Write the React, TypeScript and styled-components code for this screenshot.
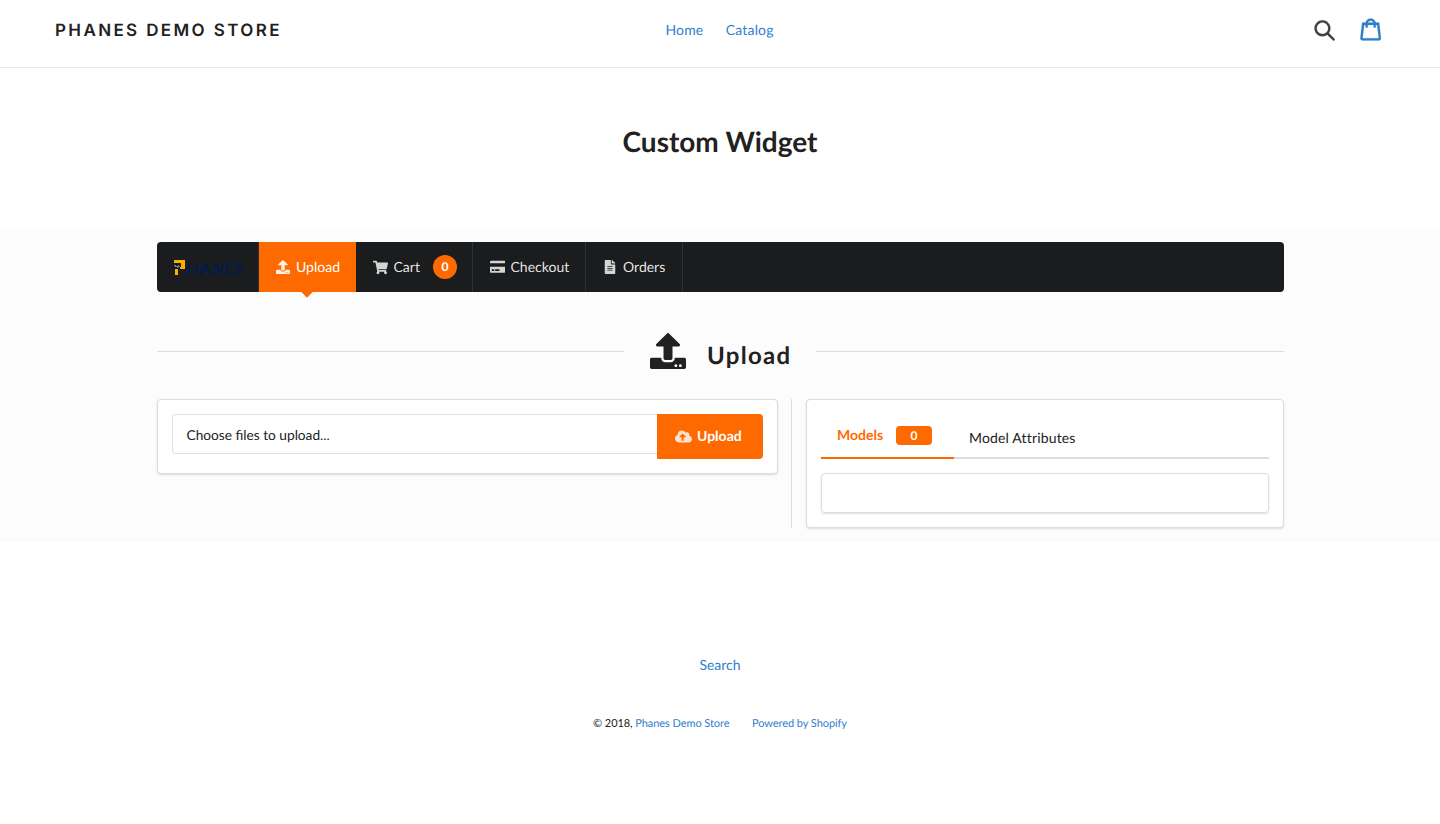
import React from "react";
import styled, { createGlobalStyle } from "styled-components";
import {
  FaUpload,
  FaShoppingCart,
  FaCreditCard,
  FaFileAlt,
  FaCloudUploadAlt,
} from "react-icons/fa";

const orange = "#ff6a00";
const link = "#2f80cc";

const GlobalStyle = createGlobalStyle`
  *, *::before, *::after { box-sizing: border-box; }
  body {
    margin: 0;
    background: #fff;
    color: #212121;
    font: 14px/20px Lato, "Liberation Sans", sans-serif;
    text-rendering: geometricPrecision;
  }
  a { color: ${link}; text-decoration: none; }
  svg { display: block; flex: none; }
`;

const Header = styled.header`
  display: grid;
  grid-template-columns: 1fr auto 1fr;
  align-items: center;
  height: 68px;
  padding: 0 59px 8px 55px;
  border-bottom: 1px solid #e8e9eb;
`;

const StoreName = styled.a`
  && { color: #212121; }
  padding-top: 2px;
  font: 620 17px/24px Inter, "Liberation Sans", sans-serif;
  letter-spacing: 2.38px;
  white-space: nowrap;
`;

const Nav = styled.nav`
  display: flex;
  gap: 22.5px;
  padding-left: 3px;
  font-size: 14px;
  letter-spacing: 0.15px;
`;

const HeaderIcons = styled.div`
  display: flex;
  justify-content: flex-end;
  gap: 24.5px;
  margin-top: -1px;
`;

const HeaderIcon = styled.svg<{ $color: string }>`
  width: 21.3px;
  height: 23px;
  fill: ${(p) => p.$color};
  stroke: ${(p) => p.$color};
  stroke-width: 0.3px;
`;

const PageTitle = styled.h1`
  margin: 0;
  height: 160px;
  padding-top: 55px;
  font-size: 28px;
  line-height: 36px;
  font-weight: 700;
  text-align: center;
`;

const Widget = styled.main`
  height: 314px;
  padding: 14px 156px 0 157px;
  background: #fcfcfc;
`;

const Menu = styled.nav`
  display: flex;
  height: 50px;
  border-radius: 4px;
  background: #1b1c1d;
`;

const MenuItem = styled.a<{ $width: number; $active?: boolean }>`
  && { color: ${(p) => (p.$active ? "#fff" : "rgba(255,255,255,.9)")}; }
  position: relative;
  display: flex;
  align-items: center;
  width: ${(p) => p.$width}px;
  padding-left: 16px;
  border-right: 1px solid ${(p) => (p.$active ? orange : "#303132")};
  background: ${(p) => (p.$active ? orange : "transparent")};
  &::after {
    content: "";
    display: ${(p) => (p.$active ? "block" : "none")};
    position: absolute;
    left: 50%;
    bottom: -4px;
    width: 8px;
    height: 8px;
    margin-left: -4px;
    background: ${orange};
    transform: rotate(45deg);
  }
`;

const ItemIcon = styled.span<{ $wide?: boolean }>`
  display: flex;
  justify-content: center;
  width: ${(p) => (p.$wide ? 16.5 : 16)}px;
  margin-right: 5px;
  opacity: 0.9;
`;

const Bubble = styled.span`
  width: 24px;
  height: 24px;
  margin-left: auto;
  margin-right: 15px;
  border-radius: 50%;
  background: ${orange};
  color: #fff;
  font-size: 12px;
  line-height: 24px;
  font-weight: 700;
  text-align: center;
`;

const Logo = styled.span`
  display: flex;
  align-items: flex-start;
  height: 17px;
  margin-top: 1px;
`;

const LogoWord = styled.span`
  padding-top: 2px;
  color: #001c4c;
  font-size: 16.5px;
  line-height: 16px;
  font-weight: 700;
  letter-spacing: 0.4px;
`;

const SectionTitle = styled.div`
  display: flex;
  align-items: center;
  height: 60px;
  margin-top: 29px;
  &::before, &::after {
    content: "";
    flex: 1;
    height: 1px;
    background: #dcddde;
  }
  &::before { flex: 0 0 467px; }
`;

const SectionLabel = styled.h2`
  display: flex;
  width: 192px;
  margin: 0;
  padding: 1px 0 0 26px;
  gap: 21px;
  font-size: 24px;
  line-height: 30px;
  font-weight: 700;
  letter-spacing: 1.3px;
`;

const SectionText = styled.span`
  padding-top: 8px;
`;

const Columns = styled.div`
  display: flex;
  align-items: flex-start;
  margin-top: 18px;
`;

const Card = styled.section<{ $width: number; $height: number }>`
  width: ${(p) => p.$width}px;
  height: ${(p) => p.$height}px;
  padding: 14px;
  border: 1px solid #dcdddd;
  border-radius: 4px;
  background: #fff;
  box-shadow: 0 1px 2px rgba(34, 36, 38, 0.15);
`;

const Separator = styled.div`
  width: 1px;
  height: 129px;
  margin: 0 14px 0 13px;
  background: #dcddde;
`;

const FileRow = styled.div`
  display: flex;
  align-items: flex-start;
`;

const FileField = styled.div`
  flex: 1;
  height: 40px;
  padding: 0 13.5px;
  border: 1px solid #dededf;
  border-right: 0;
  border-radius: 4px 0 0 4px;
  font-size: 13.7px;
  line-height: 40px;
`;

const UploadButton = styled.button`
  display: flex;
  align-items: center;
  width: 106px;
  height: 45px;
  padding: 0 0 1px 18px;
  gap: 5px;
  border: 0;
  border-radius: 0 4px 4px 0;
  background: ${orange};
  color: #fff;
  font: 700 14px/20px Lato, sans-serif;
  text-rendering: inherit;
  svg { opacity: 0.8; }
`;

const Tabs = styled.div`
  display: flex;
  height: 45px;
  border-bottom: 2px solid #dcddde;
`;

const Tab = styled.a<{ $active?: boolean }>`
  && { color: ${(p) => (p.$active ? orange : "#212121")}; }
  display: flex;
  align-items: flex-start;
  width: ${(p) => (p.$active ? "133px" : "auto")};
  height: 45px;
  padding: ${(p) => (p.$active ? "11px 0 0 16px" : "14px 15px 0")};
  border-bottom: 2px solid ${(p) => (p.$active ? orange : "transparent")};
  font-weight: ${(p) => (p.$active ? 700 : 400)};
  letter-spacing: ${(p) => (p.$active ? "0" : "0.16px")};
`;

const TabCount = styled.span`
  width: 36px;
  height: 19px;
  margin: 1px 22px 0 auto;
  border-radius: 4px;
  background: ${orange};
  color: #fff;
  font-size: 12px;
  line-height: 19px;
  text-align: center;
`;

const EmptyList = styled.div`
  height: 40px;
  margin-top: 14px;
  border: 1px solid #dcdddd;
  border-radius: 4px;
  box-shadow: 0 1px 2px rgba(34, 36, 38, 0.15);
`;

const Footer = styled.footer`
  display: flex;
  flex-direction: column;
  align-items: center;
  padding-top: 113px;
`;

const Copyright = styled.div`
  display: flex;
  gap: 22.5px;
  margin-top: 39px;
  font-size: 11px;
  letter-spacing: -0.07px;
`;

export default function App() {
  return (
    <>
      <GlobalStyle />
      <Header>
        <StoreName href="#">PHANES DEMO STORE</StoreName>
        <Nav>
          <a href="#">Home</a>
          <a href="#">Catalog</a>
        </Nav>
        <HeaderIcons>
          <HeaderIcon $color="#3d4246" viewBox="0 0 37 40">
            <path d="M35.6 36l-9.8-9.8c4.1-5.4 3.6-13.2-1.3-18.1-5.4-5.4-14.2-5.4-19.7 0-5.4 5.4-5.4 14.2 0 19.7 2.6 2.6 6.1 4.1 9.8 4.1 3 0 5.9-1 8.3-2.8l9.8 9.8c.4.4.9.6 1.4.6s1-.2 1.4-.6c.9-.9.9-2.1.1-2.9zm-20.9-8.2c-2.6 0-5.1-1-7-2.9-3.9-3.9-3.9-10.1 0-14C9.6 9 12.2 8 14.7 8s5.1 1 7 2.9c3.9 3.9 3.9 10.1 0 14-1.9 1.9-4.4 2.9-7 2.9z" />
          </HeaderIcon>
          <HeaderIcon $color={link} viewBox="0 0 37 40">
            <path d="M36.5 34.8L33.3 8h-5.9C26.7 3.9 23 .8 18.5.8S10.3 3.9 9.6 8H3.7L.5 34.8c-.2 1.5.4 2.4.9 3 .5.5 1.4 1.2 3.1 1.2h28c1.3 0 2.4-.4 3.1-1.3.7-.7 1-1.8.9-2.9zm-18-30c2.2 0 4.1 1.4 4.7 3.2h-9.5c.7-1.9 2.6-3.2 4.8-3.2zM4.5 35l2.8-23h2.2v3c0 1.1.9 2 2 2s2-.9 2-2v-3h10v3c0 1.1.9 2 2 2s2-.9 2-2v-3h2.2l2.8 23h-28z" />
          </HeaderIcon>
        </HeaderIcons>
      </Header>
      <PageTitle>Custom Widget</PageTitle>
      <Widget>
        <Menu>
          <MenuItem href="#" $width={102}>
            <Logo>
              <svg width="13" height="17" viewBox="0 0 13 17">
                <path d="M1 1h11v9H7V8h1V4H1zM2 10h3v6H2z" fill="#ffae00" />
                <path d="M1 6h2v1h2V6h1v1h1v1H5v1H4V8H2V7H1z" fill="#7d828a" />
                <path d="M2 8h2v1h3v1H2z" fill="#001c4c" />
              </svg>
              <LogoWord>HANES</LogoWord>
            </Logo>
          </MenuItem>
          <MenuItem href="#" $width={97} $active>
            <ItemIcon><FaUpload size={14} /></ItemIcon>
            Upload
          </MenuItem>
          <MenuItem href="#" $width={117}>
            <ItemIcon $wide><FaShoppingCart size={15} /></ItemIcon>
            Cart
            <Bubble>0</Bubble>
          </MenuItem>
          <MenuItem href="#" $width={113}>
            <ItemIcon $wide><FaCreditCard size={15.5} /></ItemIcon>
            Checkout
          </MenuItem>
          <MenuItem href="#" $width={97}>
            <ItemIcon><FaFileAlt size={14} /></ItemIcon>
            Orders
          </MenuItem>
        </Menu>
        <SectionTitle>
          <SectionLabel>
            <FaUpload size={36} />
            <SectionText>Upload</SectionText>
          </SectionLabel>
        </SectionTitle>
        <Columns>
          <Card $width={621} $height={75}>
            <FileRow>
              <FileField>Choose files to upload...</FileField>
              <UploadButton>
                <FaCloudUploadAlt size={17} />
                Upload
              </UploadButton>
            </FileRow>
          </Card>
          <Separator />
          <Card $width={478} $height={129}>
            <Tabs>
              <Tab href="#" $active>
                Models
                <TabCount>0</TabCount>
              </Tab>
              <Tab href="#">Model Attributes</Tab>
            </Tabs>
            <EmptyList />
          </Card>
        </Columns>
      </Widget>
      <Footer>
        <a href="#">Search</a>
        <Copyright>
          <span>
            © 2018, <a href="#">Phanes Demo Store</a>
          </span>
          <a href="#">Powered by Shopify</a>
        </Copyright>
      </Footer>
    </>
  );
}
